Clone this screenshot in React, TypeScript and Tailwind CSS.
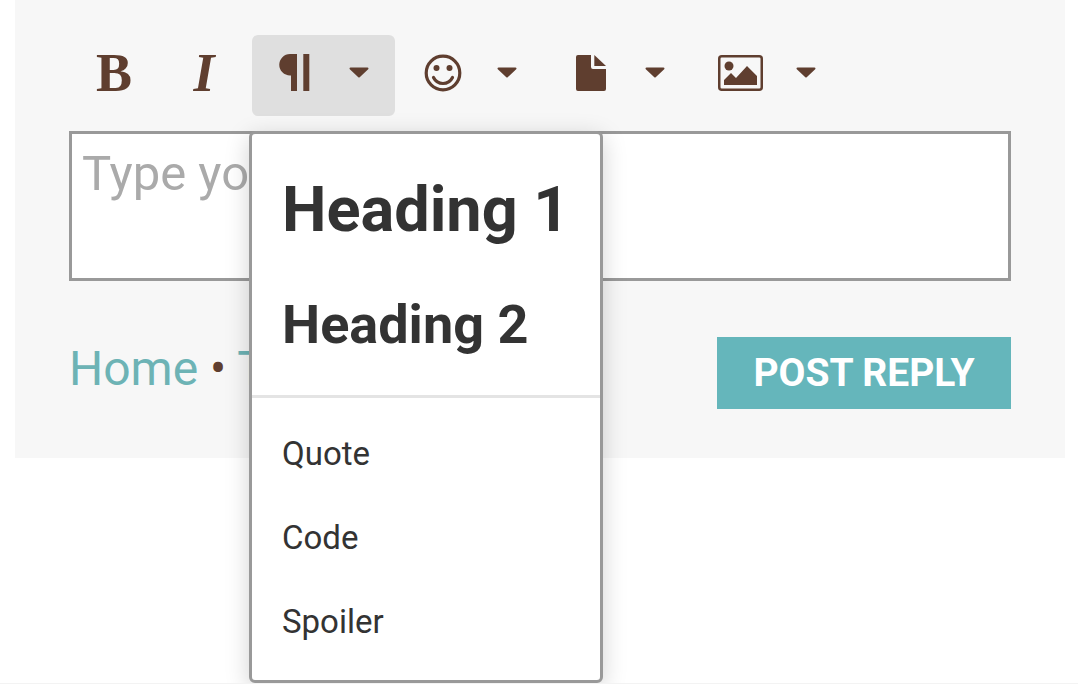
const brown = "#5f3e2f";

function Caret() {
  return (
    <svg width="20" height="11" viewBox="0 0 20 11" className="shrink-0">
      <path d="M1.5 0.5h17a1 1 0 0 1 .7 1.7l-8.5 8a1 1 0 0 1-1.4 0l-8.5-8a1 1 0 0 1 .7-1.7z" fill={brown} />
    </svg>
  );
}

function Pilcrow() {
  return (
    <svg width="31" height="37" viewBox="0 0 31 37">
      <path d="M11 0h7v37h-6V21.500h-1a10.750 10.750 0 0 1 0-21.500z" fill={brown} />
      <rect x="24.300" y="0" width="6" height="37" fill={brown} />
    </svg>
  );
}

function Smile() {
  return (
    <svg width="38" height="38" viewBox="0 0 38 38" fill="none">
      <circle cx="19" cy="19" r="16.8" stroke={brown} strokeWidth="3.2" />
      <circle cx="12.5" cy="14" r="3" fill={brown} />
      <circle cx="25.5" cy="14" r="3" fill={brown} />
      <path d="M9.5 23.5c2 4 5.5 6 9.5 6s7.500-2 9.500-6" stroke={brown} strokeWidth="3.2" strokeLinecap="round" />
    </svg>
  );
}

function FileIcon() {
  return (
    <svg width="30" height="36" viewBox="0 0 30 36">
      <path d="M2 0h13v12a2 2 0 0 0 2 2h13v20a2 2 0 0 1-2 2H2a2 2 0 0 1-2-2V2a2 2 0 0 1 2-2z" fill={brown} />
      <path d="M18.300 0L30 11H18.300z" fill={brown} />
    </svg>
  );
}

function ImageIcon() {
  return (
    <svg width="45" height="36" viewBox="0 0 45 36" fill="none">
      <rect x="1.250" y="1.250" width="42.500" height="33.500" rx="2.500" stroke={brown} strokeWidth="2.500" />
      <circle cx="11" cy="11" r="4.500" fill={brown} />
      <path d="M6 30v-5l7-7 5 5 11-12 10 10v9z" fill={brown} />
    </svg>
  );
}

function ToolButton({ icon, className }: { icon: React.ReactNode; className: string }) {
  return (
    <button className={`flex h-[81px] items-center justify-center rounded-md pb-[6px] ${className}`}>
      {icon}
      <Caret />
    </button>
  );
}

export default function App() {
  return (
    <div className="relative h-[684px] w-[1078px] overflow-hidden border-b border-[#f3f3f3] bg-white font-['Roboto',sans-serif]">
      <div className="ml-[15px] h-[458px] w-[1050px] bg-[#f7f7f7] px-[54px] pt-[35px]">
        <div className="flex h-[81px] items-center">
          <button className="h-[81px] w-[90px] pb-[6px] font-['Liberation_Serif',serif] text-[54px] leading-none font-bold text-[#5f3e2f]">B</button>
          <button className="h-[81px] w-[90px] pb-[6px] font-['Liberation_Serif',serif] text-[54px] leading-none font-bold text-[#5f3e2f] italic">I</button>
          <div className="ml-[3px] flex gap-[4px]">
            <ToolButton icon={<Pilcrow />} className="w-[143px] gap-[39px] bg-[#dfdfdf]" />
            <ToolButton icon={<Smile />} className="w-[143px] gap-[35px]" />
            <ToolButton icon={<FileIcon />} className="ml-[3px] w-[143px] gap-[39px]" />
            <ToolButton icon={<ImageIcon />} className="w-[141px] gap-[33px]" />
          </div>
        </div>

        <div className="mt-[15px] h-[150px] w-[942px] border-[3px] border-[#999999] bg-white px-[10px] py-[13px] text-[49px] leading-[54px] whitespace-nowrap text-[#aaaaaa]">
          Type your reply here
        </div>

        <div className="mt-[56px] flex h-[72px] items-center justify-between">
          <div className="pb-[8px] text-[48px] leading-none whitespace-nowrap text-[#6db3b5]">
            Home <span className="text-[#5f3e2f]">•</span> Topics
          </div>
          <button className="h-[72px] w-[294px] bg-[#65b6bb] text-[39px] font-bold text-white">POST REPLY</button>
        </div>
      </div>

      {/* format menu */}
      <div className="absolute top-[131px] left-[249px] h-[552px] w-[354px] rounded-md border-[3px] border-[#999999] bg-white shadow-[0_6px_24px_rgba(0,0,0,0.18)]">
        <div className="flex h-[264px] flex-col border-b-[3px] border-[#e4e4e4] px-[30px]">
          <div className="mt-[36px] text-[63px] leading-[80px] font-bold whitespace-nowrap text-[#333333]">Heading 1</div>
          <div className="mt-[45px] text-[54px] leading-[60px] font-bold whitespace-nowrap text-[#333333]">Heading 2</div>
        </div>
        <div className="flex flex-col px-[30px] pt-[14px] text-[33px] text-[#333333]">
          <div className="flex h-[84px] items-center">Quote</div>
          <div className="flex h-[84px] items-center">Code</div>
          <div className="flex h-[84px] items-center">Spoiler</div>
        </div>
      </div>
    </div>
  );
}
